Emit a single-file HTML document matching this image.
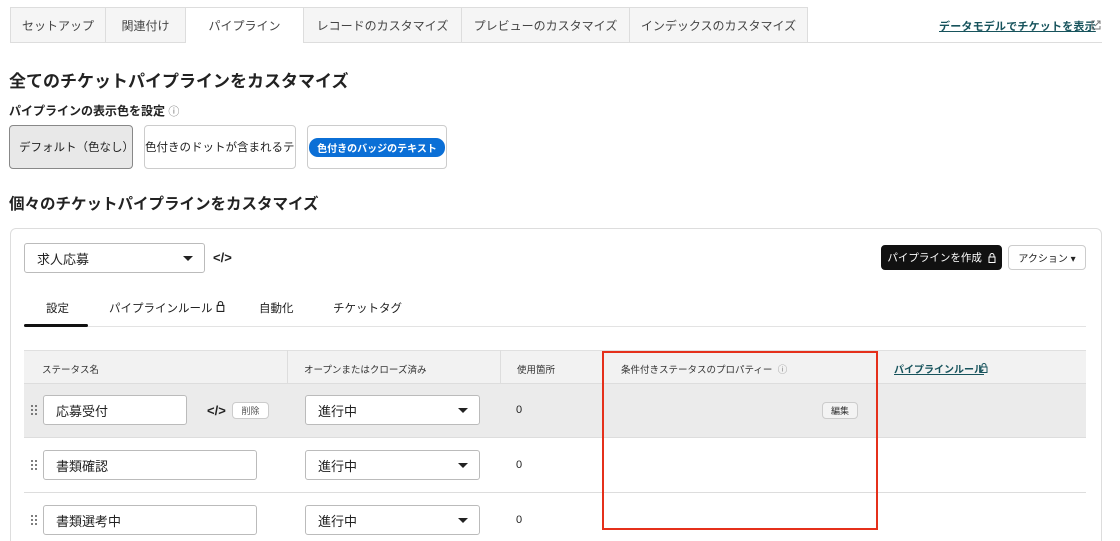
<!DOCTYPE html>
<html><head><meta charset="utf-8"><style>
*{box-sizing:border-box;margin:0;padding:0}
html,body{width:1120px;height:541px;overflow:hidden}
body{background:#fff;font-family:"Liberation Sans","Noto Sans CJK JP",sans-serif;color:#222;position:relative}
.a{position:absolute;white-space:nowrap}
.tab{position:absolute;top:7px;height:35px;background:#f5f5f5;border:1px solid #ddd;border-bottom:none;font-size:12px;color:#444;display:flex;align-items:center;justify-content:center}
.btn{position:absolute;border:1px solid #ccc;border-radius:4px;background:#fff;display:flex;align-items:center;font-size:12px;white-space:nowrap}
.inp{position:absolute;border:1px solid #bbb;border-radius:3px;background:#fff;height:30px;display:flex;align-items:center;padding-left:12px;font-size:13px}
.caret{position:absolute;width:0;height:0;border-left:5px solid transparent;border-right:5px solid transparent;border-top:5px solid #222}
.code{position:absolute;font-size:13px;font-weight:bold;line-height:14px}
</style></head><body>
<div class="tab" style="left:10px;width:96px">セットアップ</div>
<div class="tab" style="left:105px;width:81px">関連付け</div>
<div class="tab" style="left:185px;width:119px;background:#fff;height:36px">パイプライン</div>
<div class="tab" style="left:303px;width:159px">レコードのカスタマイズ</div>
<div class="tab" style="left:461px;width:169px">プレビューのカスタマイズ</div>
<div class="tab" style="left:629px;width:179px">インデックスのカスタマイズ</div>
<div class="a" style="left:303px;top:42px;width:799px;height:1px;background:#ddd"></div>
<div class="a" style="left:10px;top:42px;width:175px;height:1px;background:#ddd"></div>
<div class="a" style="left:939px;top:18px;font-size:11px;font-weight:bold;color:#17535c;text-decoration:underline;letter-spacing:0.2px">データモデルでチケットを表示</div>
<svg class="a" style="left:1091px;top:20px" width="10" height="10" viewBox="0 0 10 10"><path d="M4 1H1v8h8V6M6 1h3v3M9 1L4 6" fill="none" stroke="#777" stroke-width="1"/></svg>
<div class="a" style="left:9px;top:67px;font-size:17px;font-weight:bold">全てのチケットパイプラインをカスタマイズ</div>
<div class="a" style="left:9px;top:102px;font-size:12px;font-weight:bold">パイプラインの表示色を設定 <span style="font-weight:normal;color:#777;font-size:11px">ⓘ</span></div>
<div class="btn" style="left:9px;top:125px;width:124px;height:44px;background:#e8e8e8;border-color:#888;padding-left:9px;font-size:11.5px">デフォルト（色なし）</div>
<div class="btn" style="left:144px;top:125px;width:152px;height:44px;overflow:hidden;font-size:11.5px">色付きのドットが含まれるテキスト</div>
<div class="btn" style="left:307px;top:125px;width:140px;height:44px;justify-content:center"><span style="background:#0b6fd6;color:#fff;font-weight:bold;font-size:10px;border-radius:9px;padding:2px 8px">色付きのバッジのテキスト</span></div>
<div class="a" style="left:9px;top:192px;font-size:15.5px;font-weight:bold">個々のチケットパイプラインをカスタマイズ</div>
<div class="a" style="left:10px;top:228px;width:1092px;height:340px;border:1px solid #ddd;border-radius:6px"></div>
<div class="inp" style="left:24px;top:243px;width:181px;height:30px">求人応募</div>
<div class="caret" style="left:183px;top:256px"></div>
<div class="code" style="left:213px;top:251px">&lt;/&gt;</div>
<div class="btn" style="left:881px;top:245px;width:121px;height:25px;background:#111;border-color:#111;color:#fff;justify-content:center;font-size:10.5px">パイプラインを作成 &nbsp;<svg width="8" height="10" viewBox="0 0 8 10"><path d="M2 4V2.5a2 2 0 0 1 4 0V4M1 4h6v5.5H1z" fill="none" stroke="#fff"/></svg></div>
<div class="btn" style="left:1008px;top:245px;width:78px;height:25px;justify-content:center;font-size:10px">アクション ▾</div>
<div class="a" style="left:46px;top:300px;font-size:11.5px">設定</div>
<div class="a" style="left:109px;top:300px;font-size:11.5px">パイプラインルール <svg width="9" height="11" viewBox="0 0 8 10"><path d="M2 4V2.5a2 2 0 0 1 4 0V4M1 4h6v5.5H1z" fill="none" stroke="#222"/></svg></div>
<div class="a" style="left:259px;top:300px;font-size:11.5px">自動化</div>
<div class="a" style="left:333px;top:300px;font-size:11.5px">チケットタグ</div>
<div class="a" style="left:24px;top:326px;width:1062px;height:1px;background:#e3e3e3"></div>
<div class="a" style="left:24px;top:324px;width:64px;height:3px;background:#111;border-radius:2px"></div>
<div class="a" style="left:24px;top:350px;width:1062px;height:34px;background:#f2f2f2;border-top:1px solid #e0e0e0;border-bottom:1px solid #ddd"></div>
<div class="a" style="left:24px;top:384px;width:1062px;height:54px;background:#ebebeb;border-bottom:1px solid #ddd"></div>
<div class="a" style="left:24px;top:492px;width:1062px;height:1px;background:#ddd"></div>
<div class="a" style="left:287px;top:350px;width:1px;height:34px;background:#ddd"></div>
<div class="a" style="left:500px;top:350px;width:1px;height:34px;background:#ddd"></div>
<div class="a" style="left:877px;top:350px;width:1px;height:34px;background:#ddd"></div>
<div class="a" style="left:42px;top:362px;font-size:9.5px;color:#333">ステータス名</div>
<div class="a" style="left:304px;top:362px;font-size:9.5px;color:#333">オープンまたはクローズ済み</div>
<div class="a" style="left:517px;top:362px;font-size:9.5px;color:#333">使用箇所</div>
<div class="a" style="left:621px;top:362px;font-size:9.5px;color:#333">条件付きステータスのプロパティー &nbsp;<span style="color:#888">ⓘ</span></div>
<div class="a" style="left:894px;top:361px;font-size:10px;font-weight:bold;color:#17535c;text-decoration:underline">パイプラインルール</div>
<svg class="a" style="left:980px;top:363px" width="8" height="10" viewBox="0 0 8 10"><path d="M2 4V2.5a2 2 0 0 1 4 0V4M1 4h6v5.5H1z" fill="none" stroke="#17535c"/></svg>
<svg class="a" style="left:31px;top:405px" width="6" height="10"><g fill="#555"><circle cx="1" cy="1" r="1"/><circle cx="5" cy="1" r="1"/><circle cx="1" cy="5" r="1"/><circle cx="5" cy="5" r="1"/><circle cx="1" cy="9" r="1"/><circle cx="5" cy="9" r="1"/></g></svg>
<div class="inp" style="left:43px;top:395px;width:144px">応募受付</div>
<div class="code" style="left:207px;top:404px">&lt;/&gt;</div>
<div class="btn" style="left:232px;top:402px;width:37px;height:17px;justify-content:center;font-size:9px;color:#555">削除</div>
<div class="inp" style="left:305px;top:395px;width:175px">進行中</div><div class="caret" style="left:458px;top:408px"></div>
<div class="a" style="left:516px;top:404px;font-size:11px">0</div>
<div class="btn" style="left:822px;top:402px;width:36px;height:17px;justify-content:center;font-size:9px;background:#f3f3f3;color:#333">編集</div>
<svg class="a" style="left:31px;top:460px" width="6" height="10"><g fill="#555"><circle cx="1" cy="1" r="1"/><circle cx="5" cy="1" r="1"/><circle cx="1" cy="5" r="1"/><circle cx="5" cy="5" r="1"/><circle cx="1" cy="9" r="1"/><circle cx="5" cy="9" r="1"/></g></svg>
<div class="inp" style="left:43px;top:450px;width:214px">書類確認</div>
<div class="inp" style="left:305px;top:450px;width:175px">進行中</div><div class="caret" style="left:458px;top:463px"></div>
<div class="a" style="left:516px;top:459px;font-size:11px">0</div>
<svg class="a" style="left:31px;top:515px" width="6" height="10"><g fill="#555"><circle cx="1" cy="1" r="1"/><circle cx="5" cy="1" r="1"/><circle cx="1" cy="5" r="1"/><circle cx="5" cy="5" r="1"/><circle cx="1" cy="9" r="1"/><circle cx="5" cy="9" r="1"/></g></svg>
<div class="inp" style="left:43px;top:505px;width:214px">書類選考中</div>
<div class="inp" style="left:305px;top:505px;width:175px">進行中</div><div class="caret" style="left:458px;top:518px"></div>
<div class="a" style="left:516px;top:514px;font-size:11px">0</div>
<div class="a" style="left:602px;top:351px;width:276px;height:179px;border:2px solid #e5301b"></div>
</body></html>
